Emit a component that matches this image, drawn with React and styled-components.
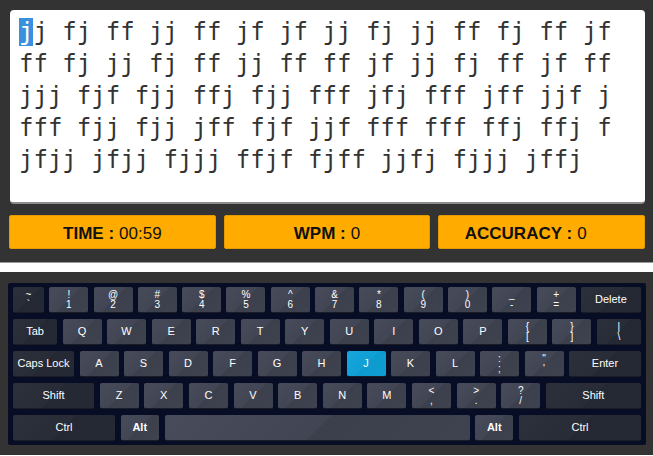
import React from 'react';
import styled, { createGlobalStyle } from 'styled-components';

const GlobalStyle = createGlobalStyle`
  body {
    margin: 0;
    background: #ffffff;
    font-family: "Liberation Sans", Arial, sans-serif;
  }
`;

const TopSection = styled.div`
  background: #333333;
  height: 263px;
  box-sizing: border-box;
  padding: 10px 8px 0 9px;
  border-bottom: 1px solid #9a9a9a;
`;

const TextBox = styled.div`
  background: #ffffff;
  height: 194px;
  box-sizing: border-box;
  margin-left: 1px;
  padding: 6px 9px;
  border-radius: 4px;
  border-bottom: 2px solid #8c8c8c;
  font-family: "DejaVu Sans Mono", monospace;
  font-size: 24px;
  line-height: 32px;
  color: #333333;
`;

const Line = styled.div`
  white-space: pre;
`;

const Char = styled.span`
  background: ${p => (p.current ? '#3a90dc' : 'transparent')};
  color: ${p => (p.current ? '#ffffff' : 'inherit')};
`;

const StatsRow = styled.div`
  display: flex;
  gap: 8px;
  margin-top: 11px;
`;

const StatBox = styled.div`
  flex: 1 1 0;
  min-width: 0;
  height: 34px;
  box-sizing: border-box;
  padding-top: 3px;
  background: #ffab00;
  border: 1px solid #e39a00;
  border-radius: 2px;
  display: flex;
  align-items: center;
  justify-content: center;
  font-size: 17px;
  color: #111111;
`;

const Label = styled.b`
  font-weight: bold;
  margin-right: 5px;
`;

const Value = styled.span`
  margin-right: ${p => p.shift || 0}px;
`;

const BottomSection = styled.div`
  background: #333333;
  margin-top: 9px;
  padding: 11px 7px 10px 8px;
`;

const Keyboard = styled.div`
  background: #060d24;
  border-radius: 2px;
  padding: 4px 5px;
  display: flex;
  flex-direction: column;
  gap: 6px;
`;

const KeyRow = styled.div`
  display: flex;
  justify-content: space-between;
`;

const Key = styled.div`
  width: ${p => p.w || 39}px;
  height: 26px;
  box-sizing: border-box;
  border-radius: 2px;
  display: flex;
  flex-direction: column;
  align-items: center;
  justify-content: center;
  color: #ffffff;
  font-size: 11px;
  line-height: 13px;
  font-weight: ${p => (p.bold ? 'bold' : 'normal')};
  border-bottom: 1px solid #1a1d26;
  background: ${p =>
    p.active
      ? 'linear-gradient(135deg, #16a6dc 0%, #11a0d6 50%, #0d9acf 51%, #0f9dd2 100%)'
      : p.dark
      ? 'linear-gradient(135deg, #2c303b 0%, #282c37 50%, #242833 51%, #262a35 100%)'
      : 'linear-gradient(135deg, #474b5a 0%, #424654 50%, #3c404d 51%, #3f4350 100%)'};
`;

const Small = styled.span`
  font-size: 10px;
  line-height: 10px;
  height: 10px;
`;

const rows = [
  [
    { t: '~', b: '`', w: 31, dark: true },
    { t: '!', b: '1' }, { t: '@', b: '2' }, { t: '#', b: '3' }, { t: '$', b: '4' },
    { t: '%', b: '5' }, { t: '^', b: '6' }, { t: '&', b: '7' }, { t: '*', b: '8' },
    { t: '(', b: '9' }, { t: ')', b: '0' }, { t: '_', b: '-' }, { t: '+', b: '=' },
    { l: 'Delete', w: 60, dark: true },
  ],
  [
    { l: 'Tab', w: 44, dark: true },
    ...'QWERTYUIOP'.split('').map(l => ({ l })),
    { t: '{', b: '[' }, { t: '}', b: ']' },
    { t: '|', b: '\\', w: 44, dark: true },
  ],
  [
    { l: 'Caps Lock', w: 61, dark: true },
    ...'ASDFGHJKL'.split('').map(l => ({ l, active: l === 'J' })),
    { t: ':', b: ';' }, { t: '"', b: "'" },
    { l: 'Enter', w: 72, dark: true },
  ],
  [
    { l: 'Shift', w: 81, dark: true },
    ...'ZXCVBNM'.split('').map(l => ({ l })),
    { t: '<', b: ',' }, { t: '>', b: '.' }, { t: '?', b: '/' },
    { l: 'Shift', w: 95, dark: true },
  ],
  [
    { l: 'Ctrl', w: 102, dark: true },
    { l: 'Alt', w: 38, bold: true },
    { l: '', w: 305 },
    { l: 'Alt', w: 38, bold: true },
    { l: 'Ctrl', w: 122, dark: true },
  ],
];

const lines = [
  'jj fj ff jj ff jf jf jj fj jj ff fj ff jf',
  'ff fj jj fj ff jj ff ff jf jj fj ff jf ff',
  'jjj fjf fjj ffj fjj fff jfj fff jff jjf j',
  'fff fjj fjj jff fjf jjf fff fff ffj ffj f',
  'jfjj jfjj fjjj ffjf fjff jjfj fjjj jffj',
];

export default function App() {
  return (
    <>
      <GlobalStyle />
      <TopSection>
        <TextBox>
          {lines.map((line, i) => (
            <Line key={i}>
              {line.split('').map((c, j) => (
                <Char key={j} current={i === 0 && j === 0}>{c}</Char>
              ))}
            </Line>
          ))}
        </TextBox>
        <StatsRow>
          <StatBox><Label>TIME :</Label><Value>00:59</Value></StatBox>
          <StatBox><Label>WPM :</Label><Value>0</Value></StatBox>
          <StatBox><Label>ACCURACY :</Label><Value shift={32}>0</Value></StatBox>
        </StatsRow>
      </TopSection>
      <BottomSection>
        <Keyboard>
          {rows.map((row, i) => (
            <KeyRow key={i}>
              {row.map((k, j) => (
                <Key key={j} w={k.w} dark={k.dark} active={k.active} bold={k.bold}>
                  {k.l !== undefined ? k.l : (
                    <>
                      <Small>{k.t}</Small>
                      <Small>{k.b}</Small>
                    </>
                  )}
                </Key>
              ))}
            </KeyRow>
          ))}
        </Keyboard>
      </BottomSection>
    </>
  );
}
